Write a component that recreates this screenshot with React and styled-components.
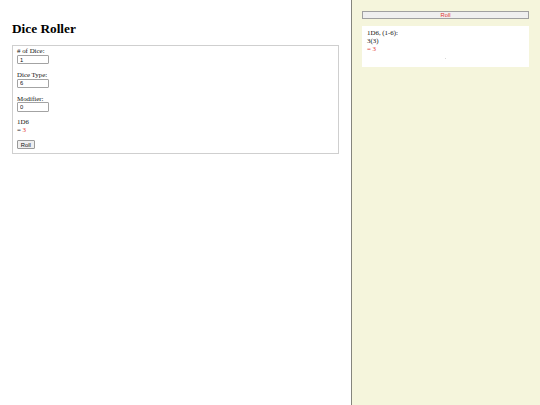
import React, { useState } from "react";
import styled, { createGlobalStyle } from "styled-components";

const GlobalStyle = createGlobalStyle`
	html, body {
		margin: 0;
		padding: 0;
	}
	body {
		font-family: "Liberation Serif", "Times New Roman", serif;
		font-size: 6.9px;
		color: #111;
		background: #fff;
	}
`;

export default function App() {
	const [count, setCount] = useState(1);
	const [sides, setSides] = useState(6);
	const [modifier, setModifier] = useState(0);
	const [rolls, setRolls] = useState([3]);

	const total = rolls.reduce((a, b) => a + b, 0) + Number(modifier);
	const label = `${count}D${sides}`;

	const roll = () => {
		const n = Math.max(1, Number(count) || 1);
		const s = Math.max(1, Number(sides) || 1);
		const next = [];
		for (let i = 0; i < n; i++) next.push(1 + Math.floor(Math.random() * s));
		setRolls(next);
	};

	return (
		<Page>
			<GlobalStyle />
			<Main>
				<Title>Dice Roller</Title>
				<Panel>
					<Field>
						<Label>
							# of Dice:
							<NumberInput value={count} onChange={(e) => setCount(e.target.value)} />
						</Label>
					</Field>
					<Field>
						<Label>
							Dice Type:
							<NumberInput value={sides} onChange={(e) => setSides(e.target.value)} />
						</Label>
					</Field>
					<Field>
						<Label>
							Modifier:
							<NumberInput value={modifier} onChange={(e) => setModifier(e.target.value)} />
						</Label>
					</Field>
					<Result>
						<div>{label}</div>
						<div>
							= <Total>{total}</Total>
						</div>
					</Result>
					<Button onClick={roll}>Roll</Button>
				</Panel>
			</Main>
			<Sidebar>
				<RollBar onClick={roll}>Roll</RollBar>
				<HistoryCard>
					<div>
						{label}, (1-{sides}):
					</div>
					<div>
						{total}({rolls.join(",")})
					</div>
					<Total>= {total}</Total>
					<Divider />
				</HistoryCard>
			</Sidebar>
		</Page>
	);
}

const Page = styled.div`
	display: flex;
	min-height: 100vh;
`;

const Main = styled.div`
	flex: 0 0 65%;
	box-sizing: border-box;
	padding: 12px;
`;

const Title = styled.h1`
	font-size: 13.3px;
	line-height: 15.5px;
	font-weight: bold;
	color: #000;
	margin: 9px 0 8px;
`;

const Panel = styled.div`
	border: 1px solid #cfcfcf;
	padding: 1.5px 4px 4px;
`;

const Field = styled.div`
	margin-bottom: 6.5px;
`;

const Label = styled.label`
	display: block;
	line-height: 7.8px;
`;

const NumberInput = styled.input`
	display: block;
	box-sizing: border-box;
	width: 31.5px;
	height: 9.5px;
	margin: 0;
	padding: 0 2px;
	font-family: "Liberation Sans", Arial, sans-serif;
	font-size: 5.8px;
	color: #111;
	border: 1px solid #a3a3a3;
	border-radius: 1px;
	outline: none;
`;

const Result = styled.div`
	line-height: 7.8px;
	margin-bottom: 6.5px;
`;

const Total = styled.span`
	color: #e3342f;
`;

const Button = styled.button`
	box-sizing: border-box;
	width: 17.5px;
	height: 8.5px;
	padding: 0;
	font-family: "Liberation Sans", Arial, sans-serif;
	font-size: 5.8px;
	background: #efefef;
	border: 1px solid #9a9a9a;
	border-radius: 1px;
	color: #111;
`;

const Sidebar = styled.div`
	flex: 1;
	box-sizing: border-box;
	background: #f5f5dc;
	border-left: 1px solid #85857d;
	padding: 11px 11px 0 10px;
`;

const RollBar = styled.button`
	display: block;
	box-sizing: border-box;
	width: 100%;
	height: 8px;
	padding: 0;
	margin-bottom: 7px;
	font-family: "Liberation Sans", Arial, sans-serif;
	font-size: 5.8px;
	color: #e3342f;
	background: #efefef;
	border: 1px solid #a0a0a0;
`;

const HistoryCard = styled.div`
	display: flex;
	flex-direction: column;
	background: #fff;
	line-height: 7.8px;
	padding: 3px 5px 8px;
`;

const Divider = styled.span`
	align-self: center;
	width: 1px;
	height: 1px;
	margin-top: 5.6px;
	background: #d8d8d8;
`;
